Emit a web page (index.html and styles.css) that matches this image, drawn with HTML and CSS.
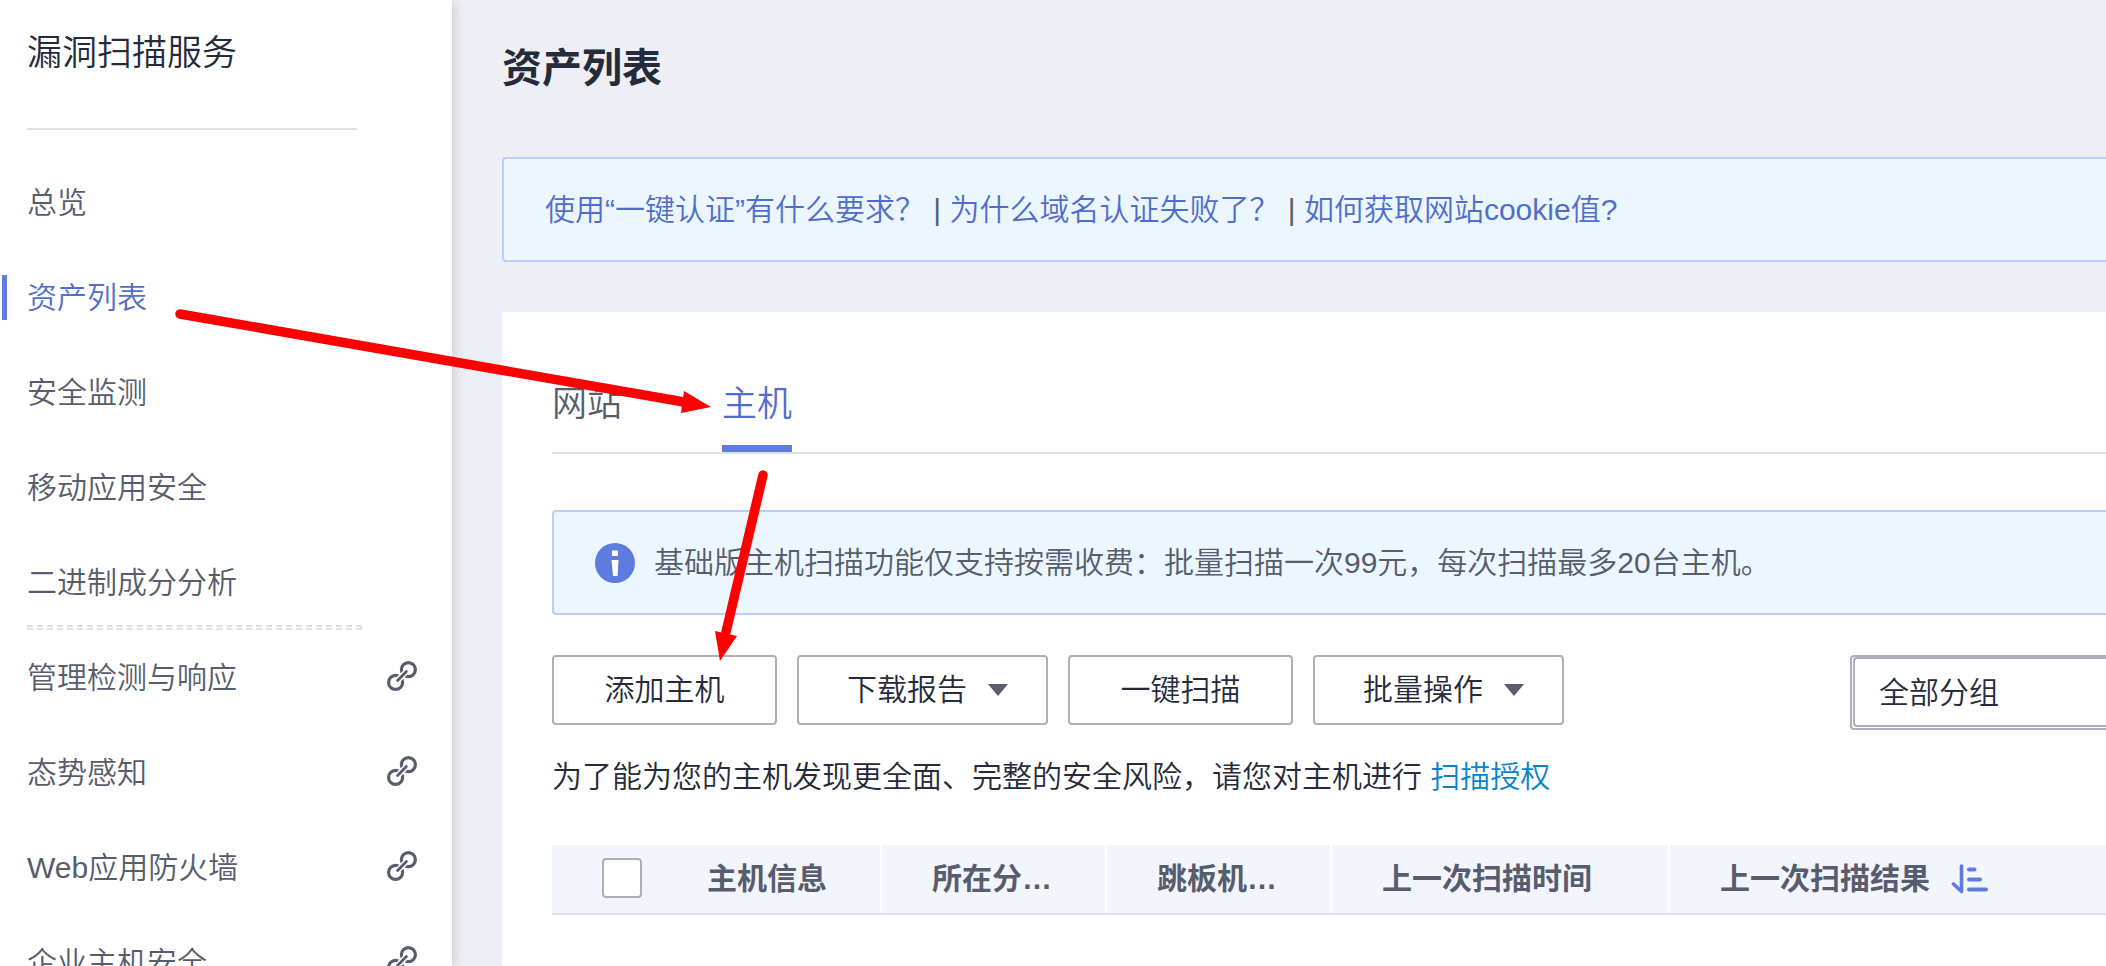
FILE: index.html
```html
<!DOCTYPE html>
<html lang="zh-CN">
<head>
<meta charset="utf-8">
<title>漏洞扫描服务 - 资产列表</title>
<link rel="stylesheet" href="styles.css">
</head>
<body>
<svg class="defs" aria-hidden="true">
  <symbol id="icon-link" viewBox="0 0 30 30">
    <g fill="none" stroke="currentColor" stroke-width="3.2">
      <circle cx="21.4" cy="8.600" r="7"/>
      <circle cx="8.600" cy="21.400" r="7"/>
    </g>
    <path d="M11 19L19 11" stroke="#fff" stroke-width="6"/>
    <path d="M10.600 19.400L19.400 10.600" stroke="currentColor" stroke-width="2.800" stroke-linecap="round"/>
  </symbol>
</svg>
<div class="layout">
  <aside class="sidebar">
    <h2 class="sidebar-title">漏洞扫描服务</h2>
    <nav class="nav">
      <a class="nav-item" href="#">总览</a>
      <a class="nav-item nav-item-active" href="#" aria-current="page">资产列表</a>
      <a class="nav-item" href="#">安全监测</a>
      <a class="nav-item" href="#">移动应用安全</a>
      <a class="nav-item" href="#">二进制成分分析</a>
      <div class="nav-divider"></div>
      <a class="nav-item" href="#">管理检测与响应<svg class="link-icon"><use href="#icon-link"/></svg></a>
      <a class="nav-item" href="#">态势感知<svg class="link-icon"><use href="#icon-link"/></svg></a>
      <a class="nav-item" href="#">Web应用防火墙<svg class="link-icon"><use href="#icon-link"/></svg></a>
      <a class="nav-item" href="#">企业主机安全<svg class="link-icon"><use href="#icon-link"/></svg></a>
    </nav>
  </aside>
  <main class="main">
    <h1 class="page-title">资产列表</h1>
    <div class="notice">
      <p class="notice-text"><a href="#">使用“一键认证”有什么要求？</a> | <a href="#">为什么域名认证失败了？</a> | <a href="#">如何获取网站cookie值?</a></p>
    </div>
    <section class="card">
      <div class="tabs" role="tablist">
        <button class="tab" type="button" role="tab" aria-selected="false">网站</button>
        <button class="tab tab-active" type="button" role="tab" aria-selected="true">主机</button>
      </div>
      <div class="notice">
        <svg class="info-icon" viewBox="0 0 40 40" aria-hidden="true">
          <circle cx="20" cy="20" r="20" fill="#5e7ce0"/>
          <path d="M17 7.5h6v5.500h-6zM16.500 17h7l-1 16h-4.500z" fill="#fff"/>
        </svg>
        <p class="notice-text">基础版主机扫描功能仅支持按需收费：批量扫描一次99元，每次扫描最多20台主机。</p>
      </div>
      <div class="toolbar">
        <button class="btn" type="button">添加主机</button>
        <button class="btn" type="button">下载报告<svg class="caret" viewBox="0 0 20 12" aria-hidden="true"><path d="M0 0h20L10 12z" fill="#575d6c"/></svg></button>
        <button class="btn" type="button">一键扫描</button>
        <button class="btn" type="button">批量操作<svg class="caret" viewBox="0 0 20 12" aria-hidden="true"><path d="M0 0h20L10 12z" fill="#575d6c"/></svg></button>
        <div class="select-box">
          <select class="select" aria-label="分组"><option>全部分组</option></select>
        </div>
      </div>
      <p class="hint">为了能为您的主机发现更全面、完整的安全风险，请您对主机进行 <a href="#">扫描授权</a></p>
      <table class="table">
        <colgroup><col class="col-check"><col class="col-short"><col class="col-short"><col class="col-short"><col class="col-time"><col></colgroup>
        <thead>
          <tr>
            <th class="th-check"><input class="checkbox" type="checkbox" aria-label="全选"></th>
            <th>主机信息</th>
            <th>所在分…</th>
            <th>跳板机…</th>
            <th>上一次扫描时间</th>
            <th><span class="sortable">上一次扫描结果<svg class="sort-icon" viewBox="0 0 38 30" aria-hidden="true"><g fill="none" stroke="#5e7ce0" stroke-linecap="round"><path d="M2.500 20l8 7.500V2" stroke-width="3.600" stroke-linejoin="round"/><path d="M18 5.500h5.500M18 15.500h11M18 25.500h17" stroke-width="4"/></g></svg></span></th>
          </tr>
        </thead>
      </table>
    </section>
  </main>
</div>
<svg class="annotations" aria-hidden="true">
  <g fill="#f00" stroke="#f00">
    <path d="M180 314L684 402" stroke-width="9.500" stroke-linecap="round"/>
    <path d="M684 391L711 407L681 413z" stroke="none"/>
    <path d="M763 475L726 632" stroke-width="9.500" stroke-linecap="round"/>
    <path d="M715 631L737 636L720 661z" stroke="none"/>
  </g>
</svg>
</body>
</html>
```
FILE: styles.css
```css
* {
  box-sizing: border-box;
}

body {
  margin: 0;
  height: 100vh;
  overflow: hidden;
  background: #eeeff5;
  color: #252b3a;
  font: 350 30px/40px "Liberation Sans", "Noto Sans CJK SC", sans-serif;
}

a {
  color: inherit;
  text-decoration: none;
}

h1,
h2,
p {
  margin: 0;
}

.defs {
  display: none;
}

.layout {
  display: flex;
  height: 100%;
}

.sidebar {
  flex: none;
  width: 452px;
  background: #fff;
  box-shadow: 2px 0 10px rgba(37, 43, 58, 0.18);
  overflow: hidden;
}

.sidebar-title {
  width: 330px;
  margin: 0 0 25px 27px;
  padding: 28px 0 50px;
  border-bottom: 2px solid #dfe1e6;
  font-size: 35px;
  font-weight: 350;
  line-height: 50px;
}

.nav-item {
  display: flex;
  align-items: center;
  justify-content: space-between;
  height: 95px;
  padding: 0 35px 0 27px;
  color: #575d6c;
}

.nav-item-active {
  justify-content: flex-start;
  gap: 20px;
  padding-left: 2px;
  color: #526ecc;
}

.nav-item-active::before {
  content: "";
  width: 5px;
  height: 45px;
  background: #5e7ce0;
}

.nav-divider {
  width: 335px;
  height: 5px;
  margin: -5px 0 0 27px;
  border: 2px dashed #dfe1e6;
}

.link-icon {
  width: 30px;
  height: 30px;
  margin-bottom: 3px;
}

.main {
  flex: 1;
  display: flex;
  flex-direction: column;
  min-width: 0;
  padding-left: 50px;
}

.page-title {
  padding: 38px 0 59px;
  font-size: 40px;
  font-weight: 700;
  line-height: 60px;
}

.notice {
  display: flex;
  align-items: center;
  gap: 19px;
  height: 105px;
  padding: 0 41px;
  border: 2px solid #beccfa;
  border-right: 0;
  border-radius: 4px 0 0 4px;
  background: #ebf6ff;
  color: #575d6c;
  white-space: nowrap;
}

.notice a {
  color: #526ecc;
}

.info-icon {
  flex: none;
  width: 40px;
  height: 40px;
}

.card {
  flex: 1;
  margin-top: 50px;
  padding: 60px 0 0 50px;
  background: #fff;
}

.tabs {
  display: flex;
  gap: 100px;
  margin-bottom: 56px;
  border-bottom: 2px solid #dfe1e6;
}

.tab {
  height: 80px;
  padding: 0 0 10px;
  border: 0;
  border-bottom: 7px solid transparent;
  background: none;
  color: #575d6c;
  font: inherit;
  font-size: 35px;
}

.tab-active {
  border-color: #5e7ce0;
  color: #526ecc;
}

.toolbar {
  display: flex;
  align-items: flex-start;
  gap: 20px;
  margin-top: 40px;
}

.btn {
  display: flex;
  align-items: center;
  justify-content: center;
  gap: 21px;
  min-width: 225px;
  height: 70px;
  padding: 0 48px;
  border: 2px solid #adb0b8;
  border-radius: 4px;
  background: #fff;
  color: #252b3a;
  font: inherit;
  white-space: nowrap;
}

.btn:has(.caret) {
  padding-right: 38px;
}

.caret {
  width: 20px;
  height: 12px;
}

.select-box {
  width: 256px;
  margin-left: auto;
  padding: 0 0 1px 1px;
  border: 2px solid #adb0b8;
  border-right: 0;
  border-radius: 4px 0 0 4px;
}

.select {
  display: block;
  width: 100%;
  height: 70px;
  padding: 2px 24px 0;
  border: 2px solid #adb0b8;
  border-right: 0;
  border-radius: 4px 0 0 4px;
  appearance: none;
  background: #fff;
  color: #252b3a;
  font: inherit;
}

.hint {
  margin: 27px 0 48px;
}

.hint a {
  color: #0a84c6;
}

.table {
  width: 100%;
  table-layout: fixed;
  border-collapse: separate;
  border-spacing: 0;
  border-bottom: 2px solid #dfe1e6;
}

.col-check {
  width: 105px;
}

.col-short {
  width: 225px;
}

.col-time {
  width: 338px;
}

.table th {
  height: 68px;
  padding: 0 0 0 50px;
  border-right: 2px solid #fff;
  background: #f2f5fc;
  color: #575d6c;
  font-weight: 700;
  text-align: left;
  white-space: nowrap;
}

.table .th-check,
.table th:last-child {
  border-right: 0;
}

.checkbox {
  display: block;
  width: 40px;
  height: 40px;
  margin: 0 0 2px;
  appearance: none;
  border: 2px solid #adb0b8;
  border-radius: 4px;
  background: #fff;
}

.sortable {
  display: flex;
  align-items: center;
  gap: 21px;
}

.sort-icon {
  width: 38px;
  height: 30px;
}

.annotations {
  position: absolute;
  top: 0;
  left: 0;
  width: 100%;
  height: 100%;
  pointer-events: none;
}
```
